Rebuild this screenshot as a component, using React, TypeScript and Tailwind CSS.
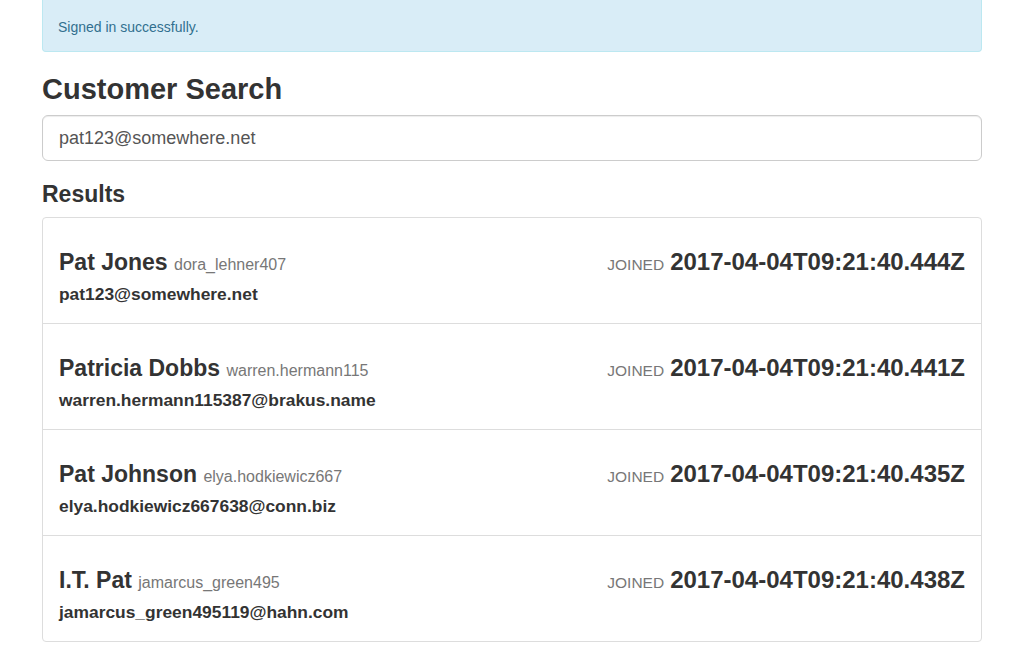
import React from "react";

interface Customer {
  name: string;
  username: string;
  email: string;
  joined: string;
}

const customers: Customer[] = [
  {
    name: "Pat Jones",
    username: "dora_lehner407",
    email: "pat123@somewhere.net",
    joined: "2017-04-04T09:21:40.444Z",
  },
  {
    name: "Patricia Dobbs",
    username: "warren.hermann115",
    email: "warren.hermann115387@brakus.name",
    joined: "2017-04-04T09:21:40.441Z",
  },
  {
    name: "Pat Johnson",
    username: "elya.hodkiewicz667",
    email: "elya.hodkiewicz667638@conn.biz",
    joined: "2017-04-04T09:21:40.435Z",
  },
  {
    name: "I.T. Pat",
    username: "jamarcus_green495",
    email: "jamarcus_green495119@hahn.com",
    joined: "2017-04-04T09:21:40.438Z",
  },
];

const CustomerRow: React.FC<{ customer: Customer; last: boolean }> = ({
  customer,
  last,
}) => (
  <div
    className={`px-4 pt-[30px] ${
      last ? "h-[105px]" : "h-[106px] border-b border-[#dddddd]"
    }`}
  >
    <div className="flex items-baseline justify-between">
      <h3 className="text-[23px] font-bold leading-[28px] text-[#333]">
        {customer.name}{" "}
        <small className="text-[16px] font-normal text-[#777]">
          {customer.username}
        </small>
      </h3>
      <h3 className="text-[24px] font-bold leading-[28px] text-[#333]">
        <small className="text-[15.5px] font-normal text-[#777] mr-[6px]">
          JOINED
        </small>
        {customer.joined}
      </h3>
    </div>
    <h4 className="mt-[5px] text-[17.4px] font-bold leading-[20px] text-[#333]">
      {customer.email}
    </h4>
  </div>
);

const App: React.FC = () => {
  return (
    <div
      className="min-h-screen bg-white text-[#333]"
      style={{ fontFamily: '"Liberation Sans", Arial, sans-serif' }}
    >
      <div className="mx-auto w-[940px]">
        {/* ALERT */}
        <div className="h-[52px] rounded-b-[4px] border border-t-0 border-[#bce8f1] bg-[#d9edf7] px-[15px] pt-[3px] flex items-center text-[14px] text-[#31708f]">
          Signed in successfully.
        </div>

        {/* HEADER */}
        <h1 className="mt-[20px] text-[29px] font-bold leading-[34px] text-[#333]">
          Customer Search
        </h1>

        {/* SEARCH */}
        <input
          defaultValue="pat123@somewhere.net"
          className="mt-[9px] block h-[46px] w-full rounded-[6px] border border-[#cccccc] px-4 text-[18px] text-[#555] shadow-[inset_0_1px_1px_rgba(0,0,0,0.075)] outline-none"
        />

        {/* RESULTS */}
        <h2 className="mt-[20px] text-[23px] font-bold leading-[26px] text-[#333]">
          Results
        </h2>
        <div className="mt-[10px] rounded-[4px] border border-[#dddddd]">
          {customers.map((c, i) => (
            <CustomerRow
              key={c.email}
              customer={c}
              last={i === customers.length - 1}
            />
          ))}
        </div>
      </div>
    </div>
  );
};

export default App;
